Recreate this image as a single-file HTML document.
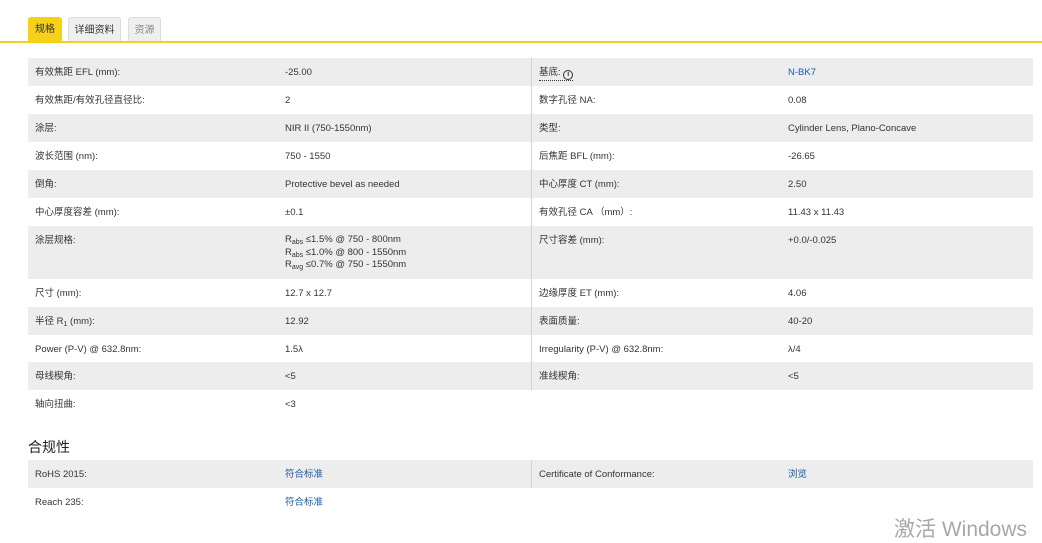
<!DOCTYPE html>
<html><head><meta charset="utf-8"><style>
*{margin:0;padding:0;box-sizing:border-box}
body{width:1042px;height:541px;background:#fff;font-family:"Liberation Sans","Noto Sans CJK SC",sans-serif;font-size:9.5px;color:#333;position:relative;overflow:hidden}
.tab{position:absolute;top:17px;height:24px;font-size:10px;line-height:26px;text-align:center;border-radius:3px 3px 0 0}
.line{position:absolute;left:0;top:41px;width:1042px;height:2px;background:#f2d01e}
.row{position:absolute;left:28px;width:1005px;height:28px}
.g{background:#ededed}
.c{position:absolute;top:9px;height:12px;line-height:12px;white-space:nowrap;display:block}
.l1{left:7px}.v1{left:257px}.l2{left:511px}.v2{left:760px}
.div{position:absolute;left:531px;top:58px;width:1px;height:332px;background:#d4d4d4}
.blue{color:#1d5aa8}
sub{font-size:7px;vertical-align:-2px;line-height:0}
</style></head><body>
<div class="tab" style="left:28px;width:34px;background:#f7d117;color:#333">规格</div>
<div class="tab" style="left:68px;width:53px;background:#efefef;border:1px solid #ddd;border-bottom:none">详细资料</div>
<div class="tab" style="left:128px;width:33px;background:#efefef;border:1px solid #ddd;border-bottom:none;color:#888">资源</div>
<div class="line"></div>

<div class="row g" style="top:58px"><span class="c l1">有效焦距 EFL (mm):</span><span class="c v1">-25.00</span><span class="c l2" style="border-bottom:1px dotted #333;height:14px">基底: <b style="display:inline-block;width:10px;height:10px;border-radius:50%;border:1.5px solid #333;color:#333;font-size:7px;line-height:7px;text-align:center;vertical-align:-1px">i</b></span><span class="c v2 blue">N-BK7</span></div>
<div class="row" style="top:86px"><span class="c l1">有效焦距/有效孔径直径比:</span><span class="c v1">2</span><span class="c l2">数字孔径 NA:</span><span class="c v2">0.08</span></div>
<div class="row g" style="top:114px"><span class="c l1">涂层:</span><span class="c v1">NIR II (750-1550nm)</span><span class="c l2">类型:</span><span class="c v2">Cylinder Lens, Plano-Concave</span></div>
<div class="row" style="top:142px"><span class="c l1">波长范围 (nm):</span><span class="c v1">750 - 1550</span><span class="c l2">后焦距 BFL (mm):</span><span class="c v2">-26.65</span></div>
<div class="row g" style="top:170px"><span class="c l1">倒角:</span><span class="c v1">Protective bevel as needed</span><span class="c l2">中心厚度 CT (mm):</span><span class="c v2">2.50</span></div>
<div class="row" style="top:198px"><span class="c l1">中心厚度容差 (mm):</span><span class="c v1">±0.1</span><span class="c l2">有效孔径 CA （mm）:</span><span class="c v2">11.43 x 11.43</span></div>
<div class="row g" style="top:226px;height:53px"><span class="c l1">涂层规格:</span><span class="c v1" style="line-height:12.5px;height:auto;top:8px">R<sub>abs</sub> ≤1.5% @ 750 - 800nm<br>R<sub>abs</sub> ≤1.0% @ 800 - 1550nm<br>R<sub>avg</sub> ≤0.7% @ 750 - 1550nm</span><span class="c l2">尺寸容差 (mm):</span><span class="c v2">+0.0/-0.025</span></div>
<div class="row" style="top:279px"><span class="c l1">尺寸 (mm):</span><span class="c v1">12.7 x 12.7</span><span class="c l2">边缘厚度 ET (mm):</span><span class="c v2">4.06</span></div>
<div class="row g" style="top:307px"><span class="c l1">半径 R<sub>1</sub> (mm):</span><span class="c v1">12.92</span><span class="c l2">表面质量:</span><span class="c v2">40-20</span></div>
<div class="row" style="top:335px;height:27px"><span class="c l1">Power (P-V) @ 632.8nm:</span><span class="c v1">1.5λ</span><span class="c l2">Irregularity (P-V) @ 632.8nm:</span><span class="c v2">λ/4</span></div>
<div class="row g" style="top:362px"><span class="c l1">母线楔角:</span><span class="c v1">&lt;5</span><span class="c l2">准线楔角:</span><span class="c v2">&lt;5</span></div>
<div class="row" style="top:390px"><span class="c l1">轴向扭曲:</span><span class="c v1">&lt;3</span></div>
<div class="div"></div>

<div style="position:absolute;left:28px;top:438px;font-size:14px;line-height:18px;color:#222">合规性</div>
<div class="row g" style="top:460px"><span class="c l1">RoHS 2015:</span><span class="c v1 blue">符合标准</span><span class="c l2">Certificate of Conformance:</span><span class="c v2 blue">浏览</span></div>
<div style="position:absolute;left:531px;top:460px;width:1px;height:28px;background:#d4d4d4"></div>
<div class="row" style="top:488px"><span class="c l1">Reach 235:</span><span class="c v1 blue">符合标准</span></div>
<div style="position:absolute;left:894px;top:517px;font-size:21px;line-height:26px;color:#a8a8a8">激活 Windows</div>
</body></html>
